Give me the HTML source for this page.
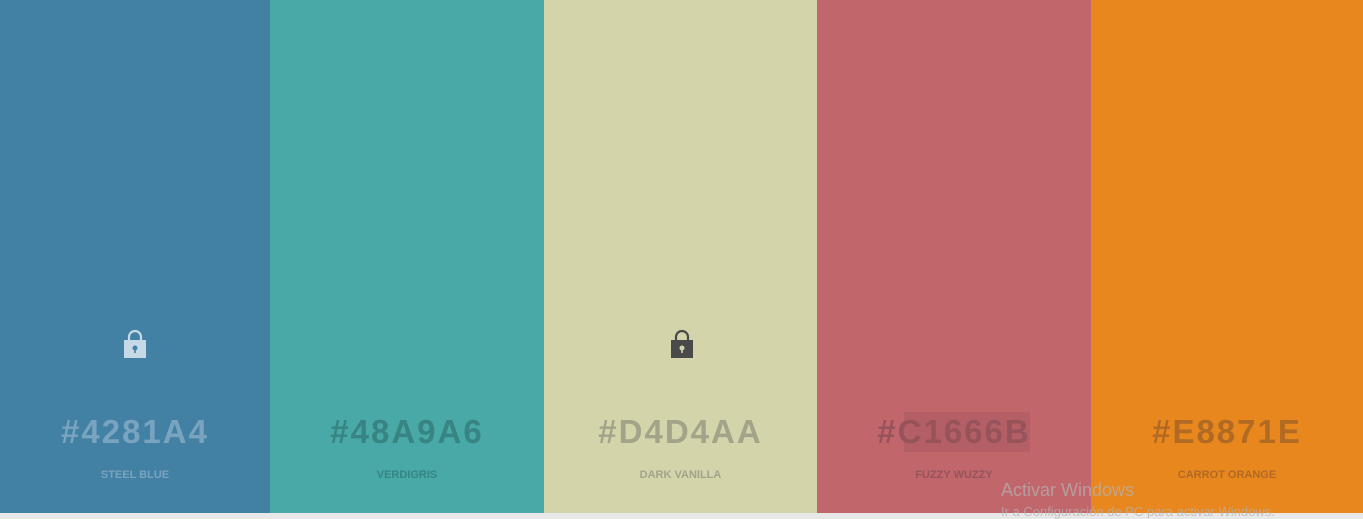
<!DOCTYPE html>
<html><head><style>
body{margin:0;width:1363px;height:516px;background:#e8e8e8;overflow:hidden;font-family:"Liberation Sans",sans-serif}
.c{position:absolute;top:0;height:513px}
.h{position:absolute;left:0;right:0;top:413px;text-align:center;font-size:33px;font-weight:bold;letter-spacing:2px}
.n{position:absolute;left:0;right:0;top:469px;text-align:center;font-size:11px;font-weight:bold}
.lk{position:absolute;top:329px}
</style></head><body>
<div class="c" style="left:0;width:270px;background:#4281A4">
<svg class="lk" style="left:123px" width="24" height="30" viewBox="0 0 24 30"><path d="M6 12V8a6 6 0 0 1 12 0v4" fill="none" stroke="#c5d9e6" stroke-width="2.2"/><rect x="1" y="11" width="22" height="18" fill="#c5d9e6"/><circle cx="12" cy="19" r="2.5" fill="#4281A4"/><rect x="11.2" y="19" width="1.6" height="5" fill="#4281A4"/></svg>
<div class="h" style="color:#7aa3c0">#4281A4</div><div class="n" style="color:#7aa3c0">STEEL BLUE</div></div>
<div class="c" style="left:270px;width:274px;background:#48A9A6">
<div class="h" style="color:#378482">#48A9A6</div><div class="n" style="color:#378482">VERDIGRIS</div></div>
<div class="c" style="left:544px;width:273px;background:#D4D4AA">
<svg class="lk" style="left:126px" width="24" height="30" viewBox="0 0 24 30"><path d="M6 12V8a6 6 0 0 1 12 0v4" fill="none" stroke="#4a4a4a" stroke-width="2.2"/><rect x="1" y="11" width="22" height="18" fill="#4a4a4a"/><circle cx="12" cy="19" r="2.5" fill="#D4D4AA"/><rect x="11.2" y="19" width="1.6" height="5" fill="#D4D4AA"/></svg>
<div class="h" style="color:#a3a38a">#D4D4AA</div><div class="n" style="color:#a3a38a">DARK VANILLA</div></div>
<div class="c" style="left:817px;width:274px;background:#C1666B">
<div style="position:absolute;left:87px;top:412px;width:126px;height:40px;background:#b45f66"></div>
<div class="h" style="color:#96545a">#C1666B</div><div class="n" style="color:#96545a">FUZZY WUZZY</div></div>
<div class="c" style="left:1091px;width:272px;background:#E8871E">
<div class="h" style="color:#b06a24">#E8871E</div><div class="n" style="color:#b06a24">CARROT ORANGE</div></div>
<div style="position:absolute;left:1001px;top:480px;font-size:18px;color:rgba(180,180,180,.7)">Activar Windows</div>
<div style="position:absolute;left:1001px;top:504px;font-size:13px;color:rgba(180,180,180,.7)">Ir a Configuración de PC para activar Windows.</div>
</body></html>
